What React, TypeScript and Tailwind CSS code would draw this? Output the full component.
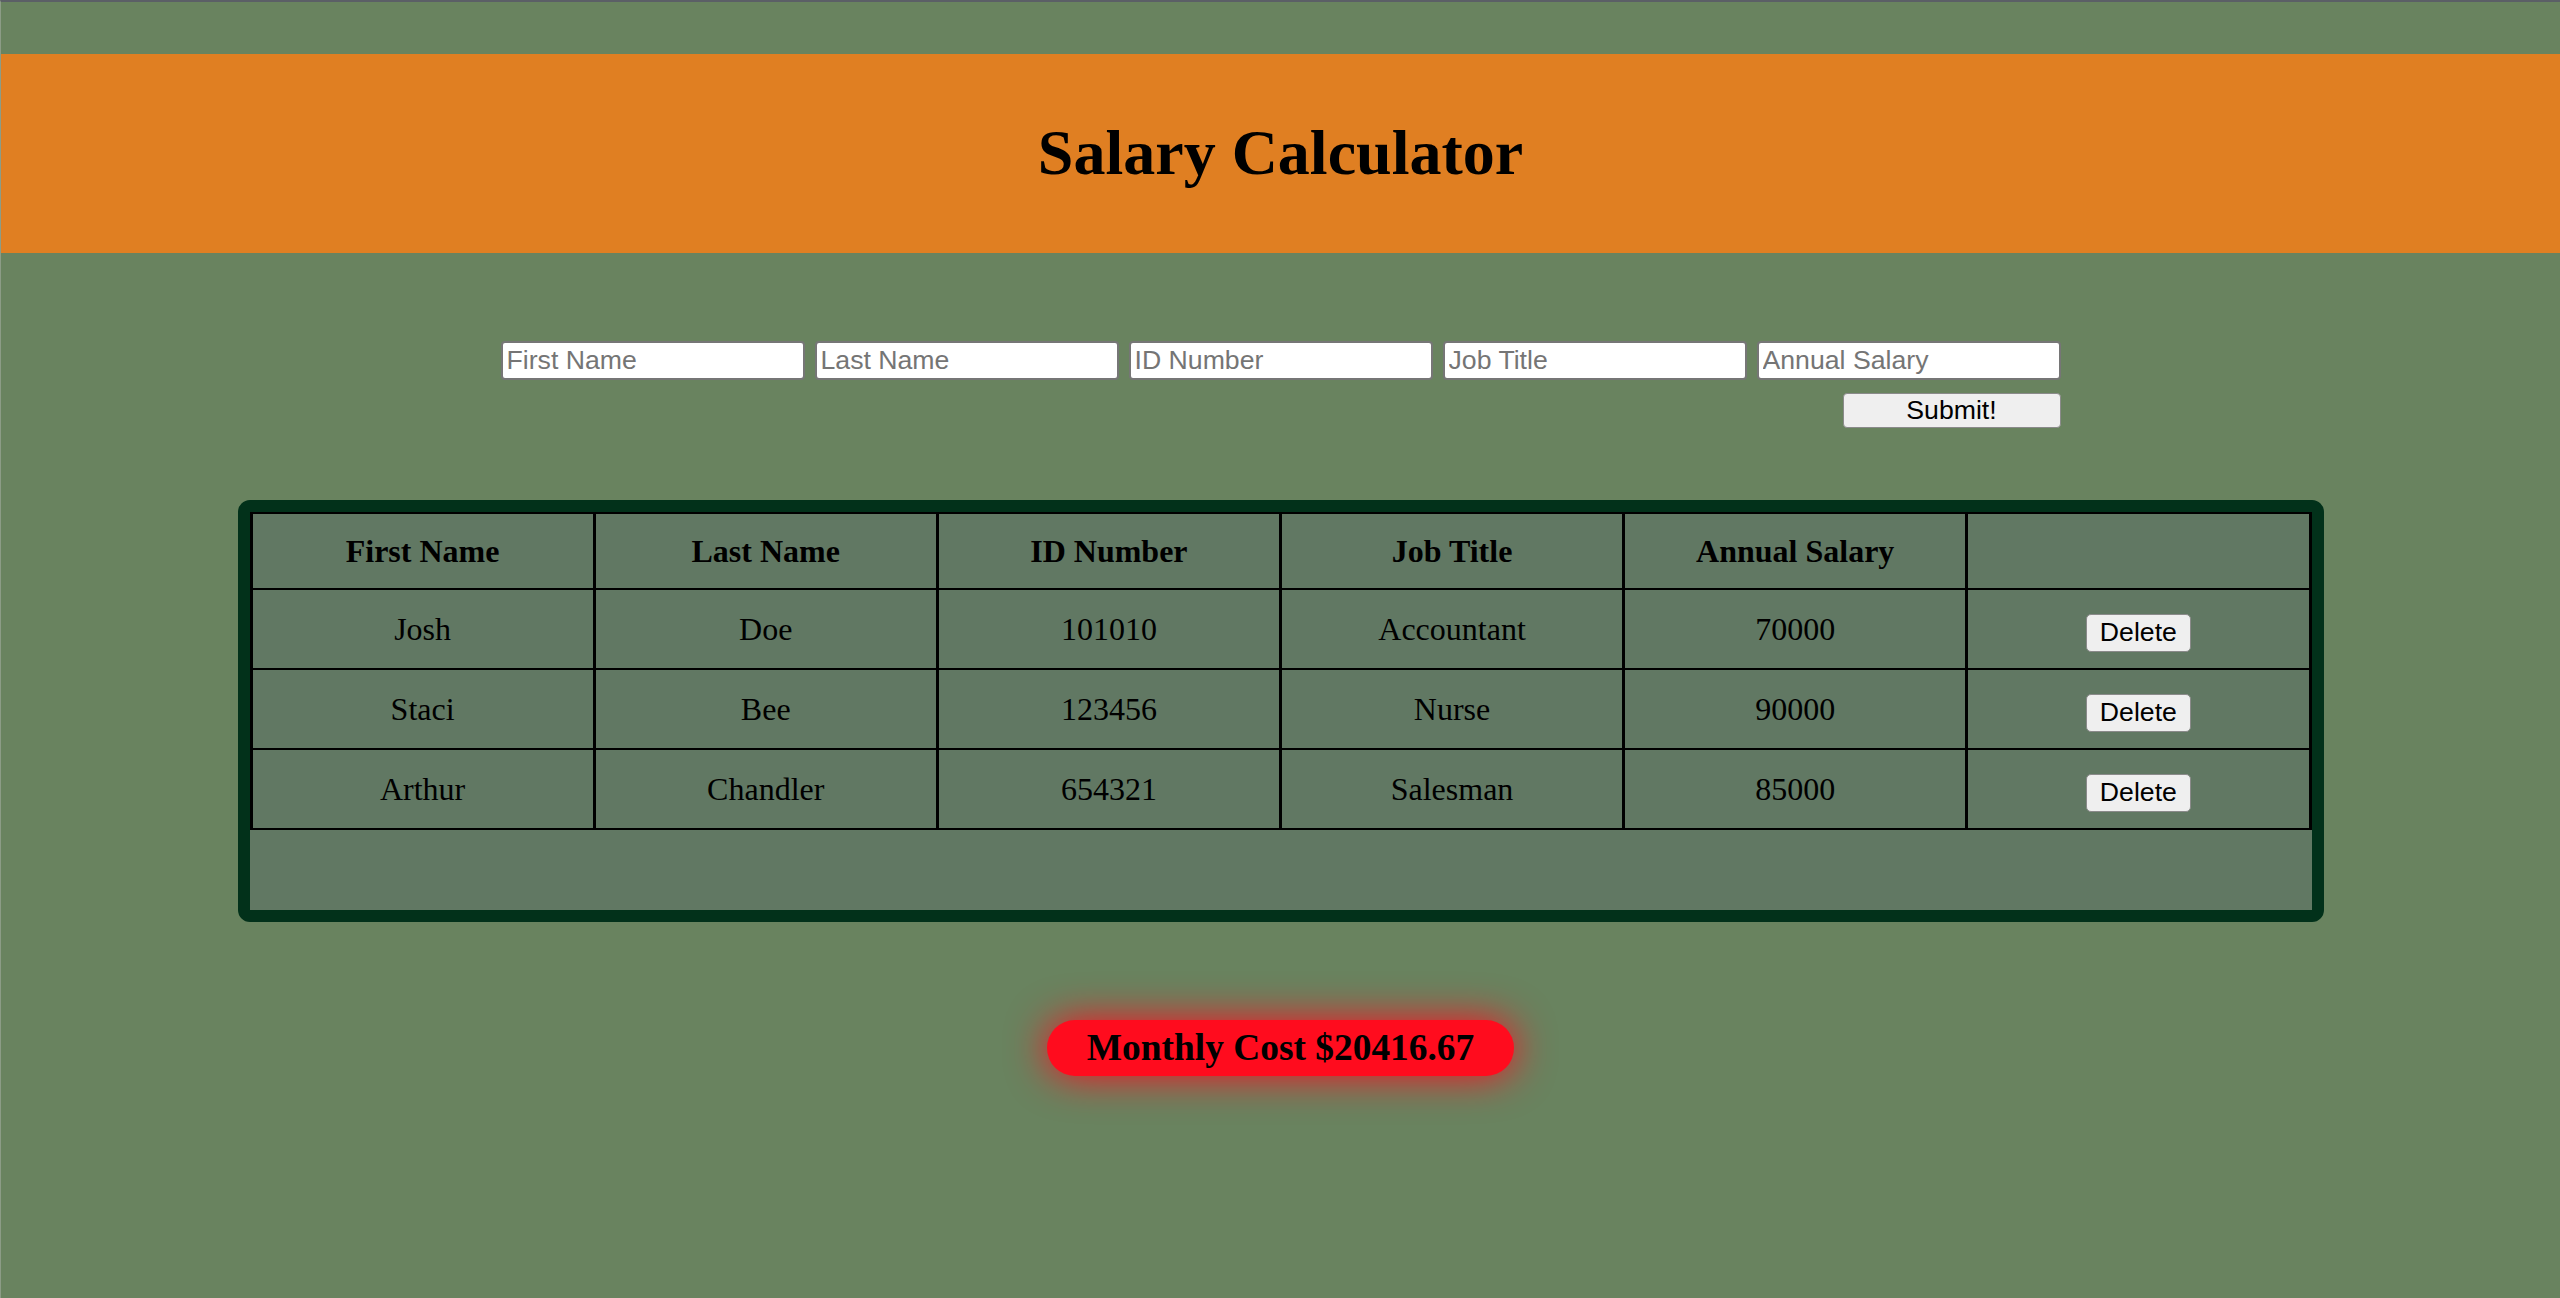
import React, { useState } from 'react';

interface Employee {
  firstName: string;
  lastName: string;
  id: string;
  title: string;
  salary: number;
}

const initialEmployees: Employee[] = [
  { firstName: 'Josh', lastName: 'Doe', id: '101010', title: 'Accountant', salary: 70000 },
  { firstName: 'Staci', lastName: 'Bee', id: '123456', title: 'Nurse', salary: 90000 },
  { firstName: 'Arthur', lastName: 'Chandler', id: '654321', title: 'Salesman', salary: 85000 },
];

const fields = ['First Name', 'Last Name', 'ID Number', 'Job Title', 'Annual Salary'];

const App = () => {
  const [employees, setEmployees] = useState<Employee[]>(initialEmployees);

  const monthly = employees.reduce((sum, e) => sum + e.salary, 0) / 12;

  const handleDelete = (index: number) => {
    setEmployees(employees.filter((_, i) => i !== index));
  };

  return (
    <div className="min-h-screen bg-[#69835f] border-t-2 border-t-[#5b5f66] border-l border-l-[#8c9c86] font-['Liberation_Serif',serif] text-black">
      <header className="mt-[52px] h-[199px] bg-[#e07f22] flex items-center justify-center">
        <h1 className="text-[64px] font-bold leading-none -mt-[2px]">Salary Calculator</h1>
      </header>

      <div className="mt-[88px] mx-auto w-[1560px] flex flex-col">
        <div className="flex gap-[10px]">
          {fields.map((field) => (
            <input
              key={field}
              placeholder={field}
              className="w-[304px] h-[39px] bg-white border-2 border-[#767676] rounded-[4px] px-[4px] font-['Liberation_Sans',Arial,sans-serif] text-[26.67px] placeholder:text-[#757575] outline-none"
            />
          ))}
        </div>
        <div className="flex justify-end mt-[13px]">
          <button className="w-[218px] h-[35px] bg-[#efefef] border border-[#8a8a8a] rounded-[4px] font-['Liberation_Sans',Arial,sans-serif] text-[26.67px] leading-none">
            Submit!
          </button>
        </div>
      </div>

      <div className="mt-[72px] mx-auto w-[2086px] border-[12px] border-[#02311a] rounded-[12px] bg-[#617863]">
        <table className="w-full table-fixed border-collapse text-[32px]">
          <thead>
            <tr className="h-[76px]">
              {fields.map((field) => (
                <th key={field} className="border-2 border-x-[3px] border-black font-bold text-center">
                  {field}
                </th>
              ))}
              <th className="border-2 border-x-[3px] border-black" />
            </tr>
          </thead>
          <tbody>
            {employees.map((e, index) => (
              <tr key={e.id} className="h-[80px]">
                <td className="border-2 border-x-[3px] border-black text-center">{e.firstName}</td>
                <td className="border-2 border-x-[3px] border-black text-center">{e.lastName}</td>
                <td className="border-2 border-x-[3px] border-black text-center">{e.id}</td>
                <td className="border-2 border-x-[3px] border-black text-center">{e.title}</td>
                <td className="border-2 border-x-[3px] border-black text-center">{e.salary}</td>
                <td className="border-2 border-x-[3px] border-black text-center">
                  <button
                    onClick={() => handleDelete(index)}
                    className="h-[38px] px-[13px] bg-[#efefef] border border-[#8a8a8a] rounded-[5px] font-['Liberation_Sans',Arial,sans-serif] text-[26.67px] leading-none align-middle"
                  >
                    Delete
                  </button>
                </td>
              </tr>
            ))}
          </tbody>
        </table>
        <div className="h-[80px]" />
      </div>

      <div className="mt-[98px] flex justify-center">
        <h3 className="bg-[#ff0c1e] rounded-full px-[40px] py-[7px] text-[37.4px] font-bold leading-[42px] shadow-[0_0_40px_#ff0c1e]">
          Monthly Cost ${monthly.toFixed(2)}
        </h3>
      </div>
    </div>
  );
};

export default App;
